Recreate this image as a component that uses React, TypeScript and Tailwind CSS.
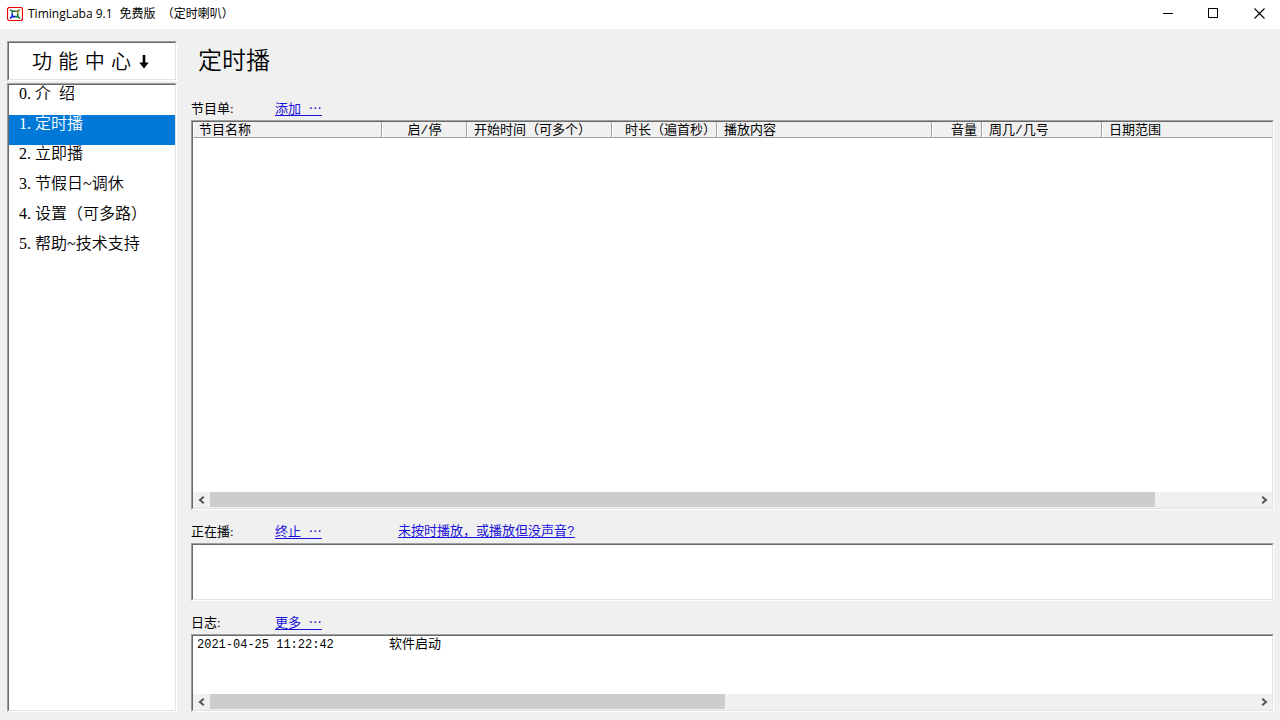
import type { ReactNode } from "react";

const SONG = "font-['Liberation_Mono','Noto_Sans_CJK_SC',monospace]";

function Sunken({ className = "", children }: { className?: string; children?: ReactNode }) {
  return (
    <div
      className={`flex min-w-0 flex-col border border-t-[#a0a0a0] border-r-white border-b-white border-l-[#a0a0a0] ${className}`}
    >
      <div className="flex min-h-0 min-w-0 flex-1 flex-col overflow-hidden border border-t-[#696969] border-r-[#e3e3e3] border-b-[#e3e3e3] border-l-[#696969] bg-white">
        {children}
      </div>
    </div>
  );
}

function Chevron({ flip = false }: { flip?: boolean }) {
  return (
    <svg viewBox="0 0 8 8" className={`h-2 w-2 ${flip ? "rotate-180" : ""}`} aria-hidden="true">
      <path d="M5.8 0.8 L2 4 L5.8 7.2" fill="none" stroke="#555" strokeWidth="2" />
    </svg>
  );
}

function ScrollBar({ thumb }: { thumb: string }) {
  return (
    <div className="flex h-4 shrink-0 items-stretch bg-[#f0f0f0] pb-px">
      <button type="button" aria-label="向左滚动" className="flex w-[17px] items-center justify-center">
        <Chevron />
      </button>
      <div className="min-w-0 flex-1">
        <div className={`h-full bg-[#cdcdcd] ${thumb}`} />
      </div>
      <button type="button" aria-label="向右滚动" className="flex w-[17px] items-center justify-center">
        <Chevron flip />
      </button>
    </div>
  );
}

function TextLink({ children }: { children: ReactNode }) {
  return (
    <a href="#" className="whitespace-pre text-[#1a10d8] underline underline-offset-2">
      {children}
    </a>
  );
}

function LabelRow({ label, action, extra }: { label: string; action: string; extra?: string }) {
  return (
    <div className="flex h-6 shrink-0 items-center pt-0.5 text-[13px] leading-4">
      <span className="w-[84px] font-['Liberation_Serif','Noto_Sans_CJK_SC',serif]">{label}:</span>
      <span className="w-[123px]">
        <TextLink>
          {action} <span className="font-['Noto_Sans_CJK_SC',sans-serif]">…</span>
        </TextLink>
      </span>
      {extra && <TextLink>{extra}</TextLink>}
    </div>
  );
}

function AppIcon() {
  return (
    <svg viewBox="0 0 16 14" className="h-3.5 w-4" aria-hidden="true">
      <rect x="0.5" y="0.5" width="15" height="13" rx="2" fill="#fff" stroke="#f00000" strokeWidth="1.2" />
      <path d="M3 2.5 L5.5 4.3 H8" fill="none" stroke="#14603c" strokeWidth="1.5" />
      <path d="M13 2.5 L10.5 4.3 H8" fill="none" stroke="#5a7a10" strokeWidth="1.5" />
      <path d="M5.2 4 V7" stroke="#107878" strokeWidth="1.4" />
      <path d="M10.8 4 V7" stroke="#807020" strokeWidth="1.4" />
      <path d="M3 11.5 L5.2 9.4 V7 M5 9.6 H8" fill="none" stroke="#0a10e8" strokeWidth="1.6" />
      <path d="M13 11.5 L10.8 9.4 V7 M11 9.6 H8" fill="none" stroke="#107a30" strokeWidth="1.6" />
    </svg>
  );
}

const menu = ["介  绍", "定时播", "立即播", "节假日~调休", "设置（可多路）", "帮助~技术支持"];

const columns = [
  { name: "节目名称", style: "w-[189px] pl-[5px] text-left" },
  { name: "启/停", style: "w-[85px] text-center" },
  { name: "开始时间（可多个）", style: "w-[145px] pl-1.5 text-left" },
  { name: "时长（遍首秒）", style: "w-[105px] text-right" },
  { name: "播放内容", style: "w-[215px] pl-1.5 text-left" },
  { name: "音量", style: "w-[50px] pr-1 text-right" },
  { name: "周几/几号", style: "w-[120px] pl-1.5 text-left" },
  { name: "日期范围", style: "pl-1.5 text-left" },
];

export default function App() {
  return (
    <div className={`flex h-screen min-h-[480px] flex-col bg-[#f0f0f0] text-black ${SONG}`}>
      <header className="flex h-[29px] shrink-0 items-start justify-between bg-white">
        <div className="flex h-[27px] items-center gap-[5px] pl-[7px]">
          <AppIcon />
          <h1 className="flex gap-[7px] whitespace-pre font-['Open_Sans','Noto_Sans_CJK_SC',sans-serif] text-xs font-normal">
            <span>TimingLaba 9.1</span>
            <span>免费版  （定时喇叭）</span>
          </h1>
        </div>
        <div className="flex h-[27px]">
          <button type="button" aria-label="最小化" className="flex w-[46px] items-center justify-center">
            <svg viewBox="0 0 11 11" className="h-[11px] w-[11px]">
              <path d="M0 5.5H10" stroke="#000" />
            </svg>
          </button>
          <button type="button" aria-label="最大化" className="flex w-[45px] items-center justify-center">
            <svg viewBox="0 0 11 11" className="h-[11px] w-[11px]">
              <rect x="0.5" y="0.5" width="9" height="9" fill="none" stroke="#000" />
            </svg>
          </button>
          <button type="button" aria-label="关闭" className="flex w-11 items-center justify-center pl-0.5">
            <svg viewBox="0 0 11 11" className="h-[11px] w-[11px]">
              <path d="M0.5 0.5L10.5 10.5M10.5 0.5L0.5 10.5" stroke="#000" strokeWidth="1.1" />
            </svg>
          </button>
        </div>
      </header>

      <div className="flex min-h-0 flex-1 gap-3.5 pr-1.5 pb-2 pl-[7px]">
        <aside className="flex w-[170px] shrink-0 flex-col gap-0.5 pt-3">
          <Sunken className="h-10 shrink-0">
            <h2 className="flex flex-1 items-center gap-2 whitespace-pre pt-0.5 pl-[23px] font-['DejaVu_Sans','Noto_Sans_CJK_SC',sans-serif] text-xl leading-6 font-[350]">
              功 能 中 心
              <svg viewBox="0 0 10 14" className="h-3.5 w-2.5" role="img" aria-label="↓">
                <path d="M3.7 0H6.3V7.5H9.8L5 13.5L0.2 7.5H3.7Z" fill="#000" />
              </svg>
            </h2>
          </Sunken>
          <Sunken className="min-h-0 flex-1">
            <nav className="flex flex-col font-['Liberation_Serif','Noto_Sans_CJK_SC',serif] text-base font-[350]">
              {menu.map((item, i) => (
                <button
                  key={item}
                  type="button"
                  aria-current={i === 1 ? "page" : undefined}
                  className={`flex h-[30px] items-start pl-2.5 text-left leading-[18px] whitespace-pre ${
                    i === 1 ? "bg-[#0078d7] text-white" : ""
                  }`}
                >
                  <span className="w-4">{i}.</span>
                  <span>{item}</span>
                </button>
              ))}
            </nav>
          </Sunken>
        </aside>

        <main className="flex min-w-0 flex-1 flex-col">
          <h2 className="flex h-[67px] shrink-0 items-center pb-2 pl-[7px] font-['Noto_Sans_CJK_SC',sans-serif] text-2xl leading-8 font-[350]">
            定时播
          </h2>

          <LabelRow label="节目单" action="添加" />
          <Sunken className="min-h-0 flex-1">
            <div className="min-h-0 flex-1 overflow-hidden">
              <table className="w-[1196px] min-w-full table-fixed border-separate border-spacing-0 text-[13px]">
                <thead>
                  <tr>
                    {columns.map((c) => (
                      <th
                        key={c.name}
                        scope="col"
                        className={`border-r border-b border-l border-r-[#a0a0a0] border-b-[#a0a0a0] border-l-white bg-[#f0f0f0] py-0 font-normal whitespace-nowrap ${c.style}`}
                      >
                        <div className="h-[15px] leading-[17px]">{c.name}</div>
                      </th>
                    ))}
                  </tr>
                </thead>
                <tbody />
              </table>
            </div>
            <ScrollBar thumb="w-[90.4%]" />
          </Sunken>

          <div className="mt-[9px] shrink-0">
            <LabelRow label="正在播" action="终止" extra="未按时播放，或播放但没声音?" />
            <Sunken className="h-[58px]" />
          </div>

          <div className="mt-[9px] shrink-0">
            <LabelRow label="日志" action="更多" />
            <Sunken className="h-[78px]">
              <div className="min-h-0 flex-1 overflow-hidden">
                <div className="flex h-[18px] items-center pl-1 leading-4">
                  <time className="w-48 text-xs">2021-04-25 11:22:42</time>
                  <span className="text-[13px]">软件启动</span>
                </div>
              </div>
              <ScrollBar thumb="w-[49.3%]" />
            </Sunken>
          </div>
        </main>
      </div>
    </div>
  );
}
